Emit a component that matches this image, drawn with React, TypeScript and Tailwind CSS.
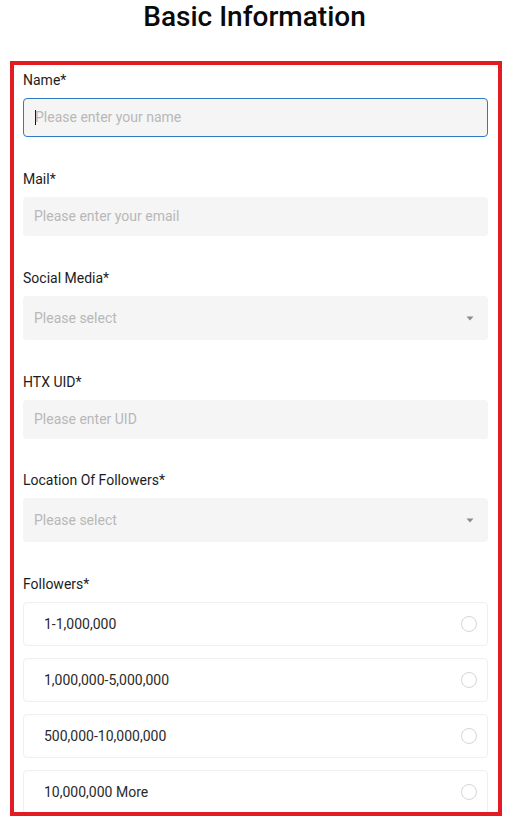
import React from 'react';

const Label: React.FC<{ children: React.ReactNode }> = ({ children }) => (
  <div className="h-5 text-[14px] leading-5 text-[#1c1c1e]">{children}</div>
);

const TextField: React.FC<{ placeholder: string; focused?: boolean }> = ({ placeholder, focused }) => (
  <div
    className={`mt-2 h-[39px] w-full rounded-[4px] bg-[#f5f5f5] flex items-center pl-[11px] text-[14px] text-[#b8b8b8] ${
      focused ? 'border border-[#2f7bbd]' : ''
    }`}
  >
    {focused && <span className="w-px h-[15px] bg-[#111] mr-[-1px]" />}
    <span>{placeholder}</span>
  </div>
);

const SelectField: React.FC<{ placeholder: string }> = ({ placeholder }) => (
  <div className="mt-2 h-[44px] w-full rounded-[4px] bg-[#f5f5f5] flex items-center justify-between pl-[11px] pr-[14px] text-[14px] text-[#b8b8b8]">
    <span>{placeholder}</span>
    <svg width="8" height="5" viewBox="0 0 8 5">
      <path d="M0.5 0.5 L7.5 0.5 L4 4.5 Z" fill="#8c8c8c" />
    </svg>
  </div>
);

const Option: React.FC<{ label: string }> = ({ label }) => (
  <div className="h-[44px] w-full rounded-[4px] border border-[#efefef] flex items-center justify-between pl-[20px] pr-[10px] text-[14px] text-[#2a2a2a]">
    <span>{label}</span>
    <span className="w-4 h-4 rounded-full border border-[#d6d6d6]" />
  </div>
);

const App: React.FC = () => {
  const options = ['1-1,000,000', '1,000,000-5,000,000', '500,000-10,000,000', '10,000,000 More'];

  return (
    <div className="w-[514px] h-[822px] bg-white overflow-hidden" style={{ fontFamily: 'Roboto, "Noto Sans", sans-serif' }}>
      {/* Title */}
      <h1 className="h-[61px] text-center text-[28px] leading-[33px] font-medium text-[#0a0a0a] pr-[5px]">
        Basic Information
      </h1>

      {/* Highlighted form */}
      <div className="ml-[10px] w-[492px] h-[755px] border-[4px] border-[#e31b23] pt-[5px] pl-[9px] pr-[10px] overflow-hidden">
        <Label>Name*</Label>
        <TextField placeholder="Please enter your name" focused />

        <div className="mt-[32px]">
          <Label>Mail*</Label>
          <TextField placeholder="Please enter your email" />
        </div>

        <div className="mt-[32px]">
          <Label>Social Media*</Label>
          <SelectField placeholder="Please select" />
        </div>

        <div className="mt-[32px]">
          <Label>HTX UID*</Label>
          <TextField placeholder="Please enter UID" />
        </div>

        <div className="mt-[31px]">
          <Label>Location Of Followers*</Label>
          <SelectField placeholder="Please select" />
        </div>

        <div className="mt-[32px]">
          <Label>Followers*</Label>
          <div className="mt-2 flex flex-col gap-3">
            {options.map((o) => (
              <Option key={o} label={o} />
            ))}
          </div>
        </div>
      </div>
    </div>
  );
};

export default App;
